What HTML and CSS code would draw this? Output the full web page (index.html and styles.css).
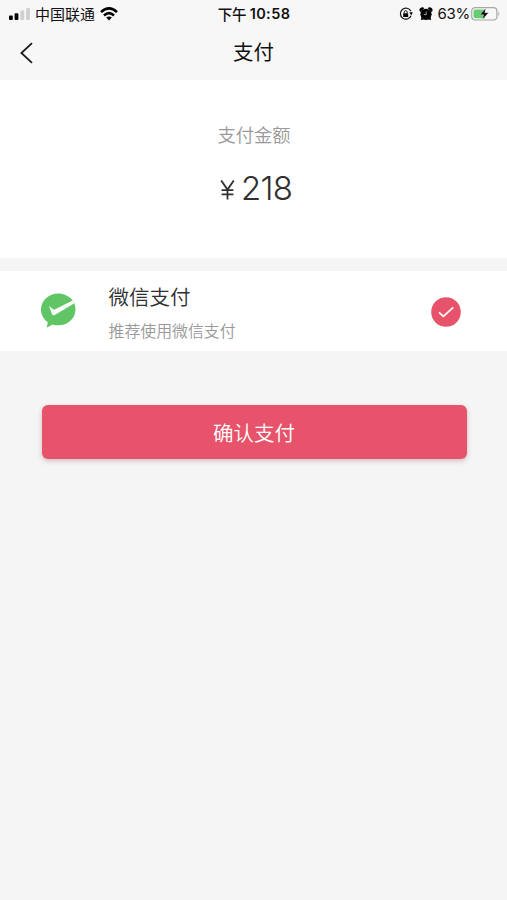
FILE: index.html
```html
<!DOCTYPE html>
<html lang="zh-CN">
<head>
<meta charset="utf-8">
<meta name="viewport" content="width=device-width">
<title>支付</title>
<link rel="stylesheet" href="styles.css">
</head>
<body>
<header class="top">
  <div class="status">
    <div class="status-left">
      <svg class="signal" width="22" height="14" viewBox="0 0 22 14"><rect x="0" y="8.5" width="3.8" height="4.5" rx="1"/><rect x="5.6" y="6.2" width="3.8" height="6.8" rx="1"/><g fill="#d0d0d0"><rect x="11.4" y="3.4" width="3.8" height="9.6" rx="1"/><rect x="17.1" y="1" width="3.8" height="12" rx="1"/></g></svg>
      <span class="carrier">中国联通</span>
      <svg class="wifi" width="18" height="14" viewBox="0 0 18 14"><g fill="none" stroke="#000" stroke-width="2.6"><path d="M1 5.1Q9-2.3 17 5.1"/><path d="M4 8.4Q9 4 14 8.4"/></g><path d="M6.2 10.5Q9 8.3 11.8 10.5L9 13.4Z"/></svg>
    </div>
    <div class="clock"><span>下午</span><span class="digits">10:58</span></div>
    <div class="status-right">
      <svg width="14" height="14" viewBox="0 0 14 14"><path d="M11.8 4.1A5.5 5.5 0 1 0 12 8.8" fill="none" stroke="#111" stroke-width="1.2"/><path d="M10.4 5.3h3.4L12.2 8.6Z"/><rect x="4.2" y="6.2" width="5" height="3.9" rx=".5"/><path d="M5.2 6.4V5.2a1.5 1.5 0 0 1 3 0v1.2" fill="none" stroke="#111"/></svg>
      <svg class="alarm" width="14" height="14" viewBox="0 0 14 14"><circle cx="7" cy="7.3" r="5.6"/><path d="M1.3 5A2.6 2.6 0 0 1 5.4 1.2ZM12.7 5A2.6 2.6 0 0 0 8.600 1.2ZM1.800 12.9l1.200-5 4 4zM12.200 12.9l-1.200-5-4 4z"/><path d="M7.2 4.6v3H4.9" fill="none" stroke="#ccc" stroke-width=".8"/></svg>
      <span class="percent">63%</span>
      <svg class="battery" width="30" height="16" viewBox="0 0 30 16"><rect x=".7" y="1.7" width="25.2" height="12.3" rx="3.5" fill="none" stroke="#a8a8a8" stroke-width="1.2"/><path d="M4.5 3.4H14v8.9H4.5a2 2 0 0 1-2-2V5.4a2 2 0 0 1 2-2Z" fill="#65cc70"/><path d="M27.4 5.5q2 2.3 0 4.7Z" fill="#a8a8a8"/><path d="M14.8 2.3 9 8.7h3.7l-1.5 4.8 6.4-6.7h-3.8Z" stroke="#f7f7f7" stroke-width=".4"/></svg>
    </div>
  </div>
  <nav class="nav">
    <svg class="back" width="15" height="22" viewBox="0 0 15 22"><path d="M13 1.2 2.4 11 13 20.8" fill="none" stroke="#1c1c1c" stroke-width="1.8"/></svg>
    <h1>支付</h1>
  </nav>
</header>
<main>
  <section class="amount">
    <div class="label">支付金额</div>
    <div class="price"><svg class="yen" width="15" height="20" viewBox="0 0 15 20" role="img" aria-label="¥"><path d="M1.2 .5 7.5 9.6 13.8 .5M7.5 9.6V19.5M1.6 10.2H13.4M1.6 14.4H13.4" fill="none" stroke="#303030" stroke-width="1.8"/></svg><span>218</span></div>
  </section>
  <section class="method">
    <svg class="wechat" width="36" height="36" viewBox="0 0 36 36"><path d="M18.2.5C8.7.5 1 7.5 1 16.5c0 5.300 2.700 9.700 6.800 12.700L6.800 34.800l5.700-3.400c1.800.6 3.700.9 5.700.9 9.600 0 17.300-6.800 17.300-15.900S27.800.5 18.200.5Z" fill="#60c565"/><path d="M9 13 13 16.200Q14 16.800 15.200 16.200L32.700 7.600 34 10.500 14.700 22Q12.900 23 12.100 21.200Z" fill="#fff"/></svg>
    <div class="method-text">
      <div class="method-name">微信支付</div>
      <div class="method-note">推荐使用微信支付</div>
    </div>
    <svg class="selected" width="30" height="30" viewBox="0 0 30 30"><circle cx="15" cy="15" r="14.8" fill="#e7536b"/><path d="m8 15.400 4.300 4L22.300 10.300" fill="none" stroke="#fff" stroke-width="1.7"/></svg>
  </section>
  <button class="confirm" type="button">确认支付</button>
</main>
</body>
</html>
```
FILE: styles.css
```css
* { box-sizing: border-box; }
body {
  margin: 0;
  min-height: 900px;
  background: #f5f5f5;
  color: #303030;
  font-family: "Noto Sans CJK SC", sans-serif;
  font-weight: 350;
}
svg { display: block; flex: none; }
.top { height: 80px; background: #f7f7f7; color: #111; }
.status {
  height: 27px;
  display: grid;
  grid-template-columns: 1fr auto 1fr;
  align-items: center;
  padding: 0 6px 0 9px;
}
.status-left, .status-right { display: flex; align-items: center; }
.status-right { justify-content: flex-end; }
.carrier { margin-left: 4px; font-size: 15px; line-height: 26px; font-weight: 400; }
.wifi { margin-left: 5px; }
.clock {
  display: flex;
  align-items: center;
  gap: 3px;
  margin-left: -2px;
  font-size: 14.5px;
  line-height: 26px;
  font-weight: 500;
}
.digits { font-family: Inter, sans-serif; font-size: 14.5px; font-weight: 600; letter-spacing: .4px; }
.alarm { margin-left: 6px; }
.percent { margin-left: 5px; font: 15px/26px Inter, sans-serif; letter-spacing: -.3px; }
.battery { margin-left: 1px; }
.nav {
  height: 53px;
  display: grid;
  grid-template-columns: 1fr auto 1fr;
  padding: 0 19px;
}
.back { margin-top: 15px; }
.nav h1 { margin: 4px 0 0; font-size: 20.5px; line-height: 40px; font-weight: 400; }
.amount {
  height: 178px;
  padding: 41px 0 0 1px;
  background: #fff;
  text-align: center;
}
.label { color: #999; font-size: 18.3px; line-height: 26px; }
.price {
  display: flex;
  justify-content: center;
  align-items: flex-end;
  gap: 6px;
  margin: 21px 0 0 4px;
  font: 350 33px/40px Inter, sans-serif;
  letter-spacing: -.8px;
}
.yen { margin-bottom: 8px; }
.method {
  display: flex;
  height: 80px;
  margin-top: 13px;
  padding: 0 46px 0 40px;
  background: #fff;
}
.wechat { margin-top: 22px; }
.method-text { flex: 1; margin-left: 32.5px; padding-top: 10px; }
.method-name { font-size: 20.5px; line-height: 30px; }
.method-note { margin-top: 8px; color: #999; font-size: 15.9px; line-height: 24px; }
.selected { margin-top: 26px; }
.confirm {
  display: block;
  width: 425px;
  height: 54px;
  margin: 54px auto 0 41.5px;
  padding: 0;
  border: 0;
  border-radius: 6px;
  background: #e7536b;
  box-shadow: 0 2px 5px rgba(130, 60, 70, .3);
  color: #fff;
  font: 350 20.5px/54px "Noto Sans CJK SC", sans-serif;
}
```
